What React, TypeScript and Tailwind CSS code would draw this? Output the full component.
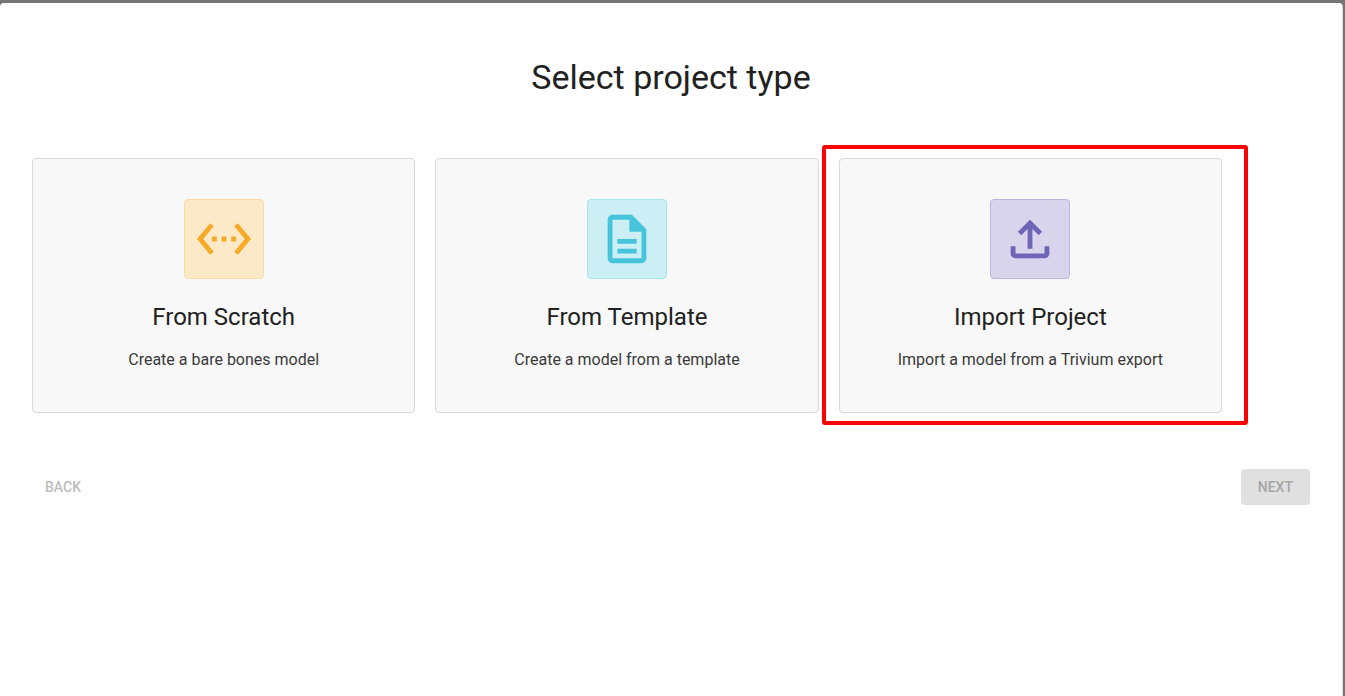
import type { ReactNode } from "react";
import { MdOutlineDescription, MdOutlineFileUpload, MdSettingsEthernet } from "react-icons/md";

type ProjectTypeProps = {
  icon: ReactNode;
  tile: string;
  title: string;
  text: string;
  highlighted?: boolean;
};

function ProjectType({ icon, tile, title, text, highlighted }: ProjectTypeProps) {
  return (
    <button
      type="button"
      className="relative flex flex-col items-center rounded border border-[#d9d9d9] bg-[#f8f8f8] px-4 pt-10 pb-10"
    >
      <span className={`flex size-20 items-center justify-center rounded border ${tile}`}>{icon}</span>
      <span className="mt-[22px] text-[24px] leading-8 text-[#212121]">{title}</span>
      <span className="mt-[15px] text-[16px] leading-6 text-[#3a3a3a]">{text}</span>
      {highlighted && (
        <span className="pointer-events-none absolute -top-[14px] -right-[27px] -bottom-[13px] -left-[18px] rounded-[3px] border-4 border-[#ff0000]" />
      )}
    </button>
  );
}

export default function App() {
  return (
    <div className="flex min-h-screen flex-col bg-[#757575] pt-[3px] pr-[2px] font-['Roboto',sans-serif]">
      <main className="flex-1 rounded-t border-r border-[#dddddd] bg-white px-8 pt-[50px]">
        <h1 className="text-center text-[34px] leading-[48px] text-[#212121]">Select project type</h1>
        <div className="mt-[57px] mr-[88px] grid grid-cols-3 gap-5">
          <ProjectType
            icon={<MdSettingsEthernet size={58} />}
            tile="border-[#fadca0] bg-[#fce9c7] text-[#f5ab28]"
            title="From Scratch"
            text="Create a bare bones model"
          />
          <ProjectType
            icon={<MdOutlineDescription size={58} />}
            tile="border-[#a8e4ee] bg-[#cceff5] text-[#45c4db]"
            title="From Template"
            text="Create a model from a template"
          />
          <ProjectType
            icon={<MdOutlineFileUpload size={58} />}
            tile="border-[#bbb6df] bg-[#d7d4eb] text-[#6e65b9]"
            title="Import Project"
            text="Import a model from a Trivium export"
            highlighted
          />
        </div>
        <div className="mt-14 flex items-center justify-between text-[14px] leading-6 font-medium">
          <button type="button" disabled className="rounded px-[13px] py-1.5 text-[#bdbdbd]">
            BACK
          </button>
          <button type="button" disabled className="rounded bg-[#e0e0e0] px-[17px] py-1.5 text-[#a6a6a6]">
            NEXT
          </button>
        </div>
      </main>
    </div>
  );
}
